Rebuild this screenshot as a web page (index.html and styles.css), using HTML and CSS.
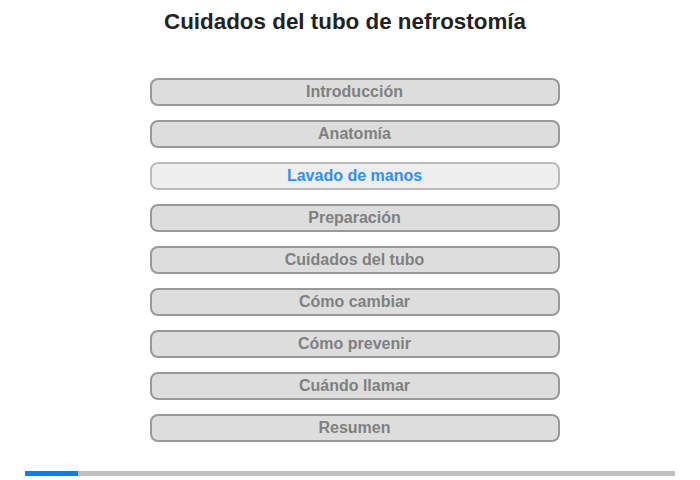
FILE: index.html
```html
<!DOCTYPE html>
<html lang="es">
<head>
<meta charset="utf-8">
<link rel="stylesheet" href="styles.css">
</head>
<body>
<div class="page">
  <h1 class="title">Cuidados del tubo de nefrostomía</h1>
  <nav class="menu">
    <div class="item">Introducción</div>
    <div class="item">Anatomía</div>
    <div class="item active">Lavado de manos</div>
    <div class="item">Preparación</div>
    <div class="item">Cuidados del tubo</div>
    <div class="item">Cómo cambiar</div>
    <div class="item">Cómo prevenir</div>
    <div class="item">Cuándo llamar</div>
    <div class="item">Resumen</div>
  </nav>
  <div class="progress"><div class="progress-fill" style="width:53px"></div></div>
</div>
</body>
</html>
```
FILE: styles.css
```css
html, body {
  margin: 0;
  padding: 0;
  background: #fff;
}
.page {
  width: 700px;
  height: 480px;
  font-family: "Liberation Sans", Arial, sans-serif;
  display: flex;
  flex-direction: column;
  align-items: center;
}
.title {
  margin: 9px 10px 0 0;
  font-size: 22.4px;
  line-height: 26px;
  font-weight: bold;
  color: #222;
  text-align: center;
}
.menu {
  margin-top: 43px;
  margin-left: 9px;
  display: flex;
  flex-direction: column;
  gap: 14px;
}
.item {
  box-sizing: border-box;
  width: 410px;
  height: 28px;
  border: 2px solid #999;
  border-radius: 8px;
  background: #ddd;
  color: #808080;
  font-size: 16px;
  font-weight: bold;
  line-height: 24px;
  text-align: center;
}
.item.active {
  background: #eee;
  border-color: #bbb;
  color: #2e8fff;
}
.progress {
  margin-top: 29px;
  width: 650px;
  height: 5px;
  background: #c0c0c0;
}
.progress-fill {
  height: 100%;
  background: #0080ff;
}
```
